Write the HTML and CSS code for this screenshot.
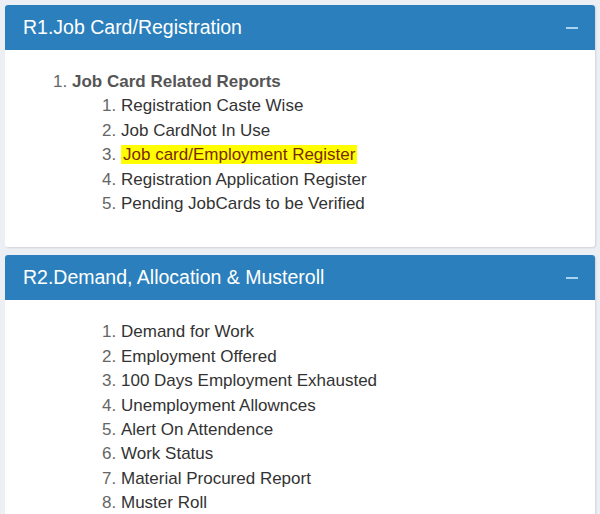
FILE: index.html
```html
<!DOCTYPE html>
<html lang="en">
<head>
    <meta charset="UTF-8">
    <meta name="viewport" content="width=device-width, initial-scale=1.0">
    <title>Reports</title>
    <link rel="stylesheet" href="styles.css">
</head>
<body>
    <div class="box">
        <div class="box-header">
            <h3 class="box-title">R1.Job Card/Registration</h3>
            <span class="box-tool"></span>
        </div>
        <div class="box-body">
            <ol class="outer">
                <li>
                    <b>Job Card Related Reports</b>
                    <ol class="inner">
                        <li>Registration Caste Wise</li>
                        <li>Job CardNot In Use</li>
                        <li><span class="mark">Job card/Employment Register</span></li>
                        <li>Registration Application Register</li>
                        <li>Pending JobCards to be Verified</li>
                    </ol>
                </li>
            </ol>
        </div>
    </div>
    <div class="box">
        <div class="box-header">
            <h3 class="box-title">R2.Demand, Allocation &amp; Musteroll</h3>
            <span class="box-tool"></span>
        </div>
        <div class="box-body">
            <ol class="inner plain">
                <li>Demand for Work</li>
                <li>Employment Offered</li>
                <li>100 Days Employment Exhausted</li>
                <li>Unemployment Allownces</li>
                <li>Alert On Attendence</li>
                <li>Work Status</li>
                <li>Material Procured Report</li>
                <li>Muster Roll</li>
            </ol>
        </div>
    </div>
</body>
</html>
```
FILE: styles.css
```css
body {
    margin: 0;
    padding: 5px;
    font-family: "Liberation Sans", Arial, sans-serif;
    background-color: #ecf0f5;
    color: #333;
}
.box {
    background-color: #fff;
    border-radius: 3px;
    box-shadow: 1px 1px 2px rgba(0, 0, 0, 0.12);
    margin-bottom: 8px;
}
.box-header {
    display: flex;
    justify-content: space-between;
    align-items: center;
    height: 45px;
    padding: 0 17px 0 18px;
    background-color: #2b7fbc;
    border-radius: 3px 3px 0 0;
    color: #fff;
}
.box-title {
    margin: 0;
    font-size: 19.5px;
    font-weight: normal;
}
.box-tool {
    width: 12px;
    height: 2px;
    background-color: #a9d3f0;
}
.box-body {
    padding: 20px 0 31px;
}
ol {
    margin: 0;
    font-size: 17px;
    line-height: 24.4px;
}
ol li::marker {
    color: #666;
}
.outer {
    padding-left: 67px;
}
.outer b {
    color: #555;
}
.inner {
    padding-left: 49px;
}
.plain {
    padding-left: 116px;
    padding-top: 0;
}
.mark {
    background-color: #ffff00;
    color: #7a2a00;
    padding: 0 2px;
}
```
